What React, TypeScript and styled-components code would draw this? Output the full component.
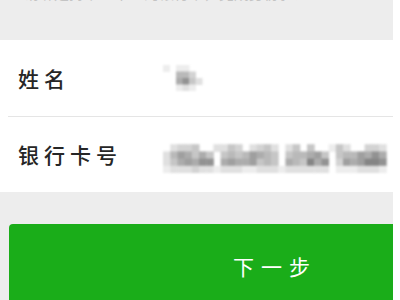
import React from "react";
import styled, { createGlobalStyle } from "styled-components";

const GlobalStyle = createGlobalStyle`
  html, body {
    margin: 0;
    padding: 0;
    background: #ffffff;
  }
  body {
    font-family: "Noto Sans CJK SC", "Noto Sans", sans-serif;
  }
`;

const Viewport = styled.div`
  width: 393px;
  height: 300px;
  overflow: hidden;
  background: #ededed;
`;

const Page = styled.div`
  width: 543px;
  display: flex;
  flex-direction: column;
`;

const Tip = styled.div`
  height: 56px;
  margin-top: -16px;
  padding-left: 24px;
  color: #c4c4c4;
  font-size: 15px;
  line-height: 18px;
  white-space: nowrap;
`;

const Card = styled.div`
  background: #ffffff;
  display: flex;
  flex-direction: column;
`;

const Row = styled.div<{ $h: number }>`
  height: ${(p) => p.$h}px;
  display: flex;
  align-items: center;
  padding-left: 18px;
`;

const Divider = styled.div`
  height: 1px;
  margin-left: 8px;
  background: #e5e5e5;
`;

const Label = styled.div`
  width: 145px;
  font-size: 21px;
  font-weight: 500;
  letter-spacing: 5px;
  color: #262626;
  line-height: 1;
`;

const Value = styled.div`
  display: flex;
  align-items: center;
`;

const Button = styled.div`
  margin: 32px 9px 0;
  height: 84px;
  border-radius: 4px;
  background: #1aad19;
  color: #ffffff;
  font-size: 21px;
  letter-spacing: 7px;
  display: flex;
  align-items: center;
  justify-content: center;
  padding-left: 7px;
  padding-bottom: 2px;
`;

type Cell = { x: number; y: number; v: number };

// mosaic drawing of a hidden value: each char is a shade (0 = white, 9 = darkest)
const Mosaic = ({ rows, cell, width }: { rows: string[]; cell: number; width: number }) => {
  const cells: Cell[] = [];
  rows.forEach((r, y) =>
    r.split("").forEach((c, x) => {
      const v = parseInt(c, 10);
      if (v > 0) cells.push({ x: x * cell, y: y * cell, v });
    })
  );
  return (
    <svg width={width} height={rows.length * cell} style={{ filter: "blur(0.8px)" }}>
      {cells.map((c, i) => {
        const g = Math.round(250 - c.v * 13);
        return (
          <rect
            key={i}
            x={c.x}
            y={c.y}
            width={cell + 0.5}
            height={cell + 0.5}
            fill={`rgb(${g},${g},${g})`}
          />
        );
      })}
    </svg>
  );
};

const nameRows = ["1011000", "0055300", "0068420", "0012100"];

const cardRows = [
  "0000000000000000000000000000000000000",
  "0233400224302342024040014200332",
  "2576464045457654045567404557686",
  "2467688067667454065496803767998",
  "1222322122211222122222201112221",
];

export default function App() {
  return (
    <>
      <GlobalStyle />
      <Viewport>
        <Page>
          <Tip>请绑定持卡人本人的银行卡，完成身份验证</Tip>
          <Card>
            <Row $h={76}>
              <Label>姓名</Label>
              <Value>
                <Mosaic rows={nameRows} cell={6.5} width={46} />
              </Value>
            </Row>
            <Divider />
            <Row $h={75}>
              <Label>银行卡号</Label>
              <Value>
                <Mosaic rows={cardRows} cell={7.2} width={230} />
              </Value>
            </Row>
          </Card>
          <Button>下一步</Button>
        </Page>
      </Viewport>
    </>
  );
}
